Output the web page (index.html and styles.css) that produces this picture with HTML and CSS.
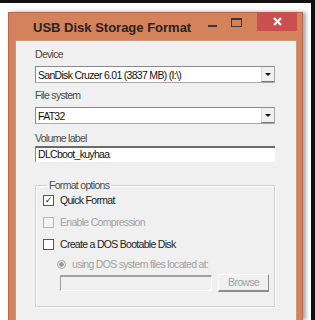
FILE: index.html
```html
<!DOCTYPE html>
<html lang="en">
<head>
    <meta charset="UTF-8">
    <title>USB Disk Storage Format</title>
    <link rel="stylesheet" href="styles.css">
</head>
<body>
    <div class="desk">
        <!-- Janela principal -->
        <div class="window">
            <div class="titlebar">
                <span class="title">USB Disk Storage Format</span>
                <div class="caption">
                    <span class="cap-min"></span>
                    <span class="cap-max"></span>
                    <span class="cap-close">
                        <svg width="9" height="9" viewBox="0 0 9 9">
                            <path d="M1 1 L8 8 M8 1 L1 8" stroke="#fff" stroke-width="2.2"/>
                        </svg>
                    </span>
                </div>
            </div>

            <div class="client">
                <div class="label first">Device</div>
                <div class="combo">
                    <span class="combo-text">SanDisk Cruzer 6.01 (3837 MB) (I:\)</span>
                    <span class="combo-btn"></span>
                </div>

                <div class="label">File system</div>
                <div class="combo">
                    <span class="combo-text">FAT32</span>
                    <span class="combo-btn"></span>
                </div>

                <div class="label vol">Volume label</div>
                <div class="textbox">DLCboot_kuyhaa</div>

                <fieldset class="group">
                    <legend>Format options</legend>
                    <div class="check-row">
                        <span class="box checked">&#10003;</span>
                        <span>Quick Format</span>
                    </div>
                    <div class="check-row disabled">
                        <span class="box"></span>
                        <span>Enable Compression</span>
                    </div>
                    <div class="check-row">
                        <span class="box"></span>
                        <span>Create a DOS Bootable Disk</span>
                    </div>
                    <div class="check-row radio-row disabled">
                        <span class="radio"></span>
                        <span>using DOS system files located at:</span>
                    </div>
                    <div class="path-row">
                        <div class="path-box"></div>
                        <div class="browse">Browse</div>
                    </div>
                </fieldset>
            </div>
        </div>
    </div>
</body>
</html>
```

FILE: styles.css
```css
* {
    margin: 0;
    padding: 0;
    box-sizing: border-box;
}

body {
    background: #fff;
    font-family: 'Liberation Sans', Arial, sans-serif;
    font-size: 10.5px;
    letter-spacing: -0.7px;
    color: #222;
    overflow: hidden;
}

.desk {
    height: 320px;
    border-top: 3px solid #111;
    border-right: 4px solid #111;
    padding: 9px 0 0 8px;
    display: flex;
}

/* Moldura laranja */
.window {
    width: 295px;
    height: 100%;
    background: #d4825b;
    border: 1px solid #b9694a;
    border-bottom: none;
    padding: 0 5px 0 6px;
    display: flex;
    flex-direction: column;
    box-shadow: 3px 0 4px rgba(0, 0, 0, 0.35);
}

.titlebar {
    height: 27px;
    display: flex;
    align-items: flex-start;
}

.title {
    font-size: 13px;
    letter-spacing: 0;
    font-weight: 700;
    color: #2a2320;
    margin-left: 18px;
    margin-top: 7px;
}

.caption {
    margin-left: auto;
    display: flex;
    align-items: flex-start;
    margin-top: -1px;
}

.cap-min {
    width: 9px;
    height: 2px;
    background: #3a3a3a;
    margin-top: 13px;
}

.cap-max {
    width: 11px;
    height: 9px;
    border: 1px solid #3a3a3a;
    border-top-width: 2px;
    margin: 6px 0 0 14px;
}

.cap-close {
    width: 40px;
    height: 19px;
    background: #c9504e;
    margin-left: 15px;
    display: flex;
    align-items: center;
    justify-content: center;
}

/* Area cliente */
.client {
    flex: 1;
    background: #f0f0f0;
    border: 1px solid #c79a80;
    border-bottom: none;
    padding: 0 21px 0 19px;
}

.label {
    height: 13px;
    line-height: 13px;
    color: #4a4a4a;
    margin-top: 6px;
    margin-bottom: 5px;
}

.label.first {
    margin-top: 7px;
    margin-bottom: 5px;
}

.label.vol {
    margin-top: 8px;
    margin-bottom: 3px;
}

.combo {
    height: 17px;
    background: #fff;
    border: 1px solid #a9a9a9;
    border-top-color: #8a8a8a;
    border-left-color: #8a8a8a;
    display: flex;
    align-items: center;
    padding-left: 2px;
    color: #111;
}

.combo-text {
    flex: 1;
    white-space: nowrap;
}

.combo-btn {
    width: 13px;
    height: 15px;
    background: #f0f0f0;
    border-left: 1px solid #d8d8d8;
    border-bottom: 1px solid #777;
    position: relative;
}

.combo-btn::after {
    content: '';
    position: absolute;
    left: 3px;
    top: 6px;
    border-left: 3px solid transparent;
    border-right: 3px solid transparent;
    border-top: 3px solid #111;
}

.textbox {
    height: 16px;
    background: #fff;
    border-top: 2px solid #6a6a6a;
    border-left: 1px solid #8a8a8a;
    padding-left: 2px;
    line-height: 13px;
    color: #111;
    margin-top: -2px;
}

/* Grupo de opcoes */
.group {
    margin-top: 17px;
    height: 128px;
    border: 1px solid #d0d0d0;
    box-shadow: inset 1px 1px 0 #fff, 1px 1px 0 #fff;
    padding: 0 5px 0 7px;
}

.group legend {
    padding: 0 2px;
    margin-left: 4px;
    line-height: 13px;
    color: #4a4a4a;
}

.check-row {
    height: 22px;
    display: flex;
    align-items: center;
    gap: 6px;
    color: #222;
}

.check-row:first-of-type {
    margin-top: -3px;
}

.check-row.disabled {
    color: #a2a2a2;
}

.box {
    width: 11px;
    height: 11px;
    background: #fff;
    border: 1px solid #555;
    font-family: 'DejaVu Sans', sans-serif;
    font-size: 9px;
    letter-spacing: 0;
    line-height: 9px;
    text-align: center;
    font-weight: 700;
    color: #222;
}

.disabled .box {
    border-color: #b5b5b5;
    background: #f4f4f4;
}

.radio-row {
    margin-left: 14px;
    height: 18px;
    margin-top: 0;
}

.radio {
    width: 9px;
    height: 9px;
    border-radius: 50%;
    border: 1px solid #a8a8a8;
    background: radial-gradient(circle, #9a9a9a 0 2px, #f0f0f0 2.5px);
}

.path-row {
    display: flex;
    align-items: center;
    gap: 6px;
    margin-left: 17px;
    margin-top: 1px;
}

.path-box {
    width: 152px;
    height: 16px;
    border: 1px solid #fff;
    border-top: 2px solid #a0a0a0;
    border-left: 1px solid #a0a0a0;
    background: #f0f0f0;
}

.browse {
    width: 51px;
    height: 18px;
    border: 1px solid #fff;
    border-right-color: #8c8c8c;
    border-bottom: 2px solid #8c8c8c;
    color: #a2a2a2;
    text-align: center;
    line-height: 15px;
}
```
